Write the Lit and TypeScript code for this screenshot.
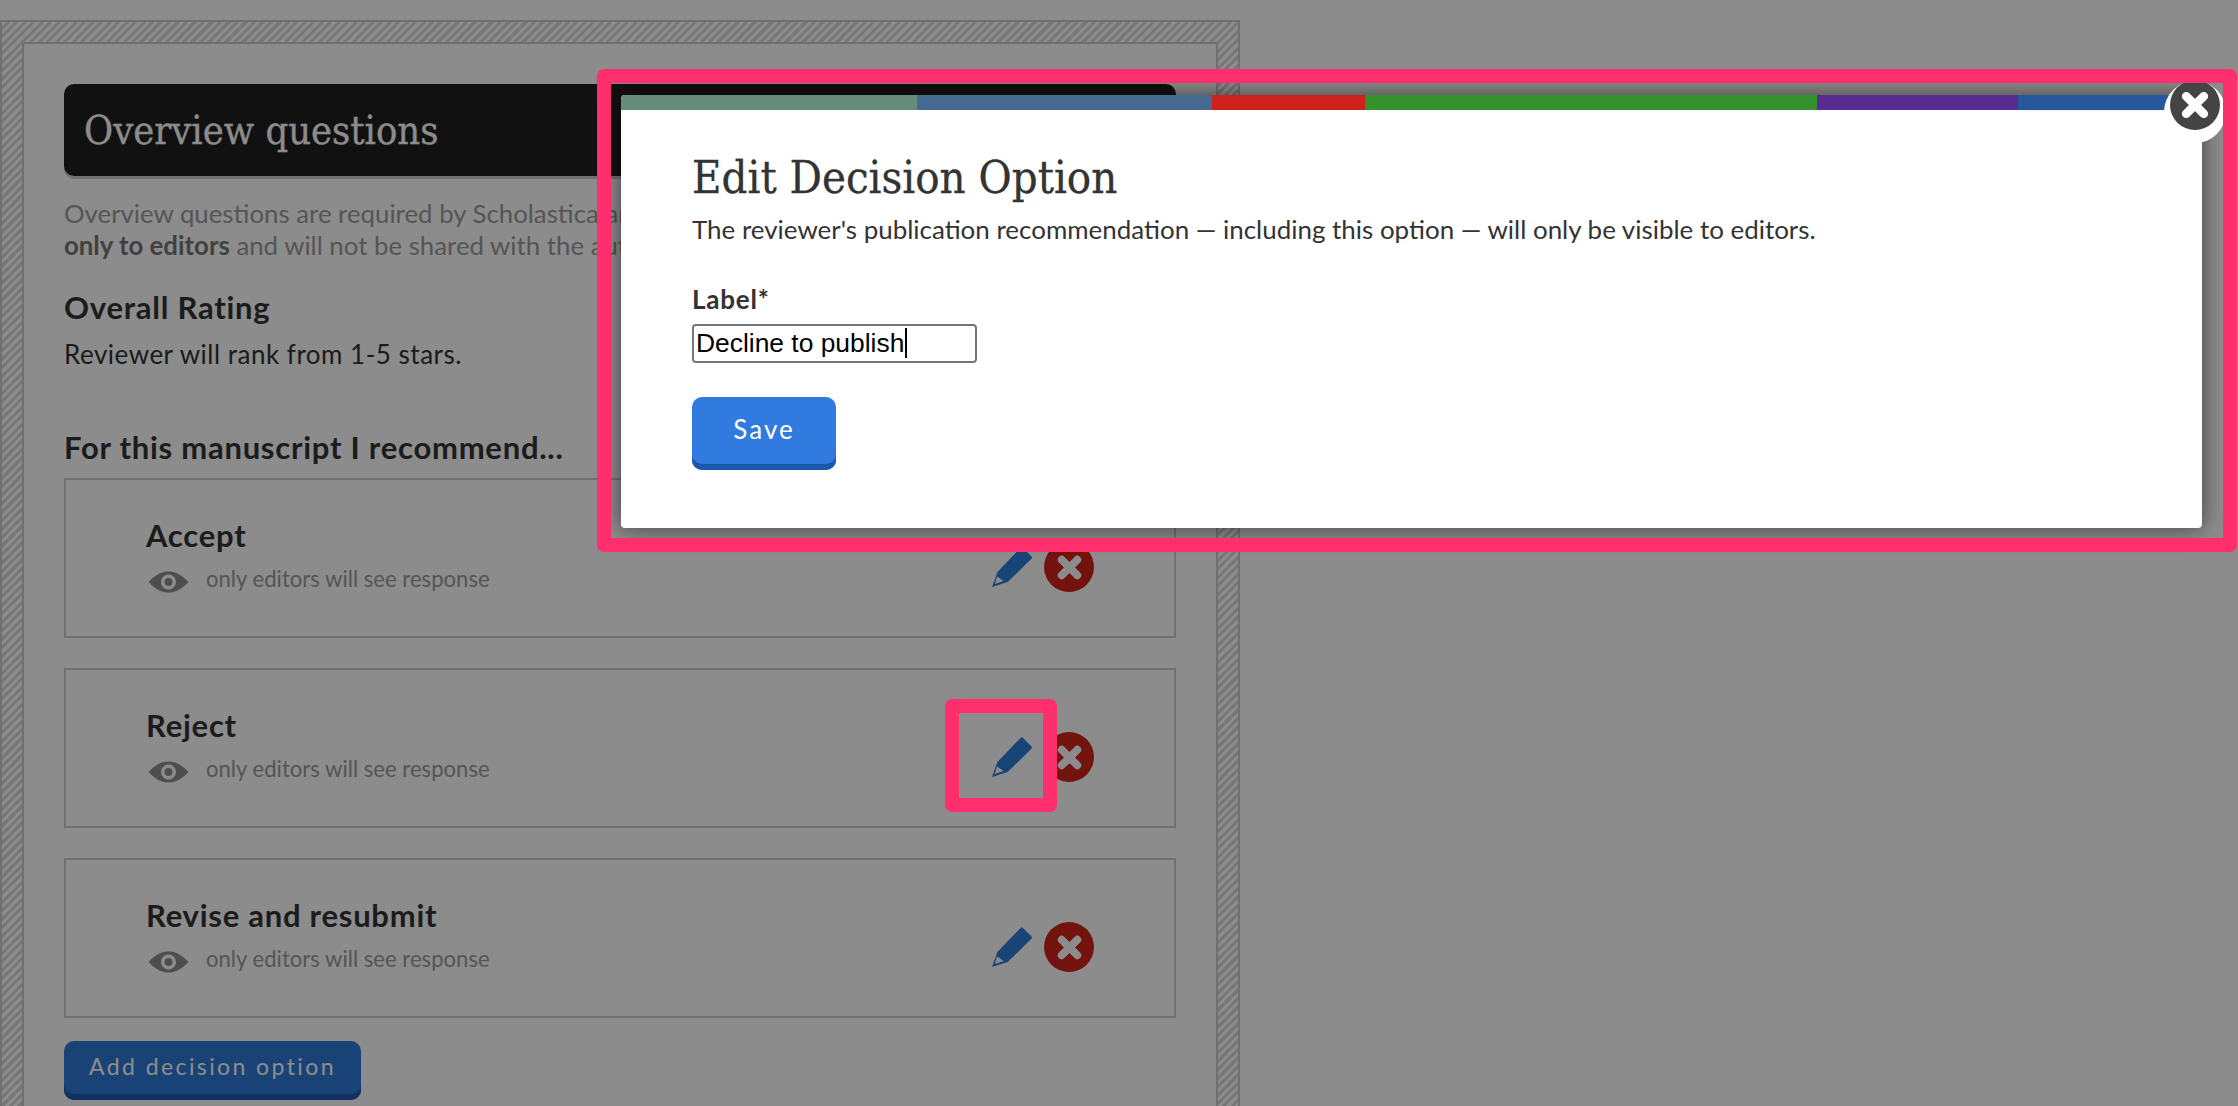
import { LitElement, html, css, svg } from "lit";
import { customElement } from "lit/decorators.js";

const STRIPES: [string, number][] = [
  ["#668b7a", 296], ["#456990", 295], ["#cf211e", 153],
  ["#33922b", 452], ["#592a8f", 201], ["#28579e", 184],
];
const OPTIONS = ["Accept", "Reject", "Revise and resubmit"];

const pencil = svg`<svg class="pencil" viewBox="0 0 40 40" aria-hidden="true"><path fill-rule="evenodd" d="M28.5 1 Q29.8 -.3 31 1 L39.4 9.2 Q40.5 10.5 39.4 11.8 L15.7 35 L0 40 L5.4 25 Z M5 29.5 L2.8 37 L11.7 34 Z"/></svg>`;
const cross = svg`<svg class="cross" viewBox="0 0 24 24" aria-hidden="true"><path d="M4.5 4.5 L19.5 19.5 M19.5 4.5 L4.5 19.5"/></svg>`;
const eye = svg`<svg class="eye" viewBox="0 0 41 22" aria-hidden="true"><path fill-rule="evenodd" d="M0.5 11 C8 3 14 0.5 20.5 0.5 C27 0.5 33 3 40.5 11 C33 19 27 21.5 20.5 21.5 C14 21.5 8 19 0.5 11 Z M20.5 3.5 A7.5 7.5 0 1 0 20.5 18.5 A7.5 7.5 0 1 0 20.5 3.5 Z"/><circle cx="20.5" cy="11" r="4"/></svg>`;

@customElement("app-root")
export class AppRoot extends LitElement {
  static styles = css`
    :host { display: block; height: 1106px; overflow: hidden; background: #fff; position: relative;
      font-family: Lato, "Open Sans", sans-serif; color: #333; }
    .page { padding-top: 20px; width: 1240px; }
    .hatch { box-sizing: border-box; width: 1240px; padding: 20px; border: 2px solid #ccc; border-bottom: 0;
      background: repeating-linear-gradient(135deg, #fff 0 3px, #d9d9d9 3px 6px); }
    .panel { background: #fff; border: 2px solid #ccc; border-bottom: 0; padding: 40px 40px 0; height: 1100px; }
    .head { height: 92px; box-sizing: border-box; margin: 0; padding: 0 20px; border-radius: 10px; background: #1f1f1f; color: #fff;
      box-shadow: 0 3px 0 #d0d0d0; font: 400 39.5px/93px "DejaVu Serif Condensed", "DejaVu Serif", serif; font-stretch: condensed;
      -webkit-text-stroke: .3px currentColor; }
    .intro { margin: 21px 0 0; font-size: 25.8px; line-height: 32px; color: #9b9b9b; white-space: nowrap; overflow: hidden; }
    .intro b { color: #777; font-weight: 700; }
    h3 { margin: 0; font-size: 31px; line-height: 36px; font-weight: 700; letter-spacing: .75px; color: #333; }
    .rating { margin-top: 28px; }
    .rank { margin: 11px 0 0; font-size: 26px; letter-spacing: .5px; line-height: 36px; }
    .rec { margin-top: 57px; }
    .cards { margin-top: 13px; display: flex; flex-direction: column; gap: 30px; }
    .card { box-sizing: border-box; height: 160px; border: 2px solid #ccc; display: flex; align-items: flex-start;
      padding: 37px 80px 0; background: #fff; }
    .card .info { flex: 1; min-width: 0; }
    .card h4 { margin: 0; font-size: 31px; line-height: 36px; font-weight: 700; letter-spacing: .75px; color: #333; }
    .note { display: flex; align-items: center; gap: 17px; margin-top: 12px; margin-left: 2px; font-size: 22.1px; line-height: 28px; color: #9b9b9b; }
    .eye { width: 41px; height: 22px; fill: #8f8f8f; flex: none; margin-top: 6px; filter: blur(.5px); }
    .actions { display: flex; align-items: center; gap: 12px; margin-top: 25px; }
    .pencil { width: 40px; height: 40px; fill: #2f7ed8; display: block; }
    .del { width: 50px; height: 50px; border-radius: 50%; background: #d1231b; display: grid; place-items: center; }
    .cross { width: 25px; height: 25px; fill: none; stroke: #fff; stroke-width: 7.5; stroke-linecap: round; display: block; }
    .add { display: block; margin-top: 23px; width: 297px; height: 59px; border: 0; border-radius: 10px; padding: 0 0 9px;
      background: #2f7ad9; box-shadow: inset 0 -6px 0 #205ab0; color: #fff; font: 400 23px Lato, sans-serif; letter-spacing: 2.4px; }
    .scrim { position: absolute; inset: 0; background: rgba(0,0,0,.45); }
    .modal { position: absolute; left: 621px; top: 95px; width: 1581px; height: 433px; background: #fff; border-radius: 4px;
      box-shadow: 0 0 22px rgba(0,0,0,.55); box-sizing: border-box; }
    .stripe { display: flex; height: 15px; border-radius: 4px 4px 0 0; overflow: hidden; }
    .stripe i { display: block; }
    .body { padding: 38px 71px 0; }
    h2 { margin: 0; font: 400 45px/60px "DejaVu Serif Condensed", "DejaVu Serif", serif; font-stretch: condensed; color: #333;
      -webkit-text-stroke: .3px currentColor; }
    .sub { margin: 3px 0 0; font-size: 25.95px; line-height: 36px; color: #333; }
    label { display: block; margin-top: 35px; font-size: 26px; letter-spacing: .8px; line-height: 34px; font-weight: 700; color: #333; }
    .field { position: relative; width: 285px; height: 39px; margin-top: 8px; }
    input { box-sizing: border-box; width: 285px; height: 39px; border: 2px solid #767676; border-radius: 4px; padding: 0 2px;
      margin: 0; font: 400 26.4px "Liberation Sans", Arial, sans-serif; color: #000; background: #fff; outline: none; display: block; }
    .caret { position: absolute; left: 213px; top: 4px; width: 2px; height: 30px; background: #000; }
    .save { display: block; margin-top: 34px; width: 144px; height: 73px; border: 0; border-radius: 10px; padding: 0 0 9px;
      background: #317be0; box-shadow: inset 0 -6px 0 #1a58ac; color: #fff; font: 400 26px Lato, sans-serif; letter-spacing: 2px; }
    .close-bg { position: absolute; left: 2164px; top: 81px; width: 62px; height: 62px; border-radius: 50%; background: #fff; }
    .close { position: absolute; left: 2170px; top: 80px; width: 50px; height: 50px; border-radius: 50%; background: #444;
      display: grid; place-items: center; }
    .close .cross { width: 28px; height: 28px; }
    .mark { position: absolute; box-sizing: border-box; border: 14px solid #ff2e6d; border-radius: 7px; }
    .mark.big { left: 597px; top: 69px; width: 1640px; height: 483px; }
    .mark.small { left: 945px; top: 699px; width: 112px; height: 113px; }
  `;

  render() {
    return html`
      <div class="page">
        <div class="hatch">
          <div class="panel">
            <div class="head">Overview questions</div>
            <p class="intro">Overview questions are required by Scholastica and responses to them are visible<br><b>only to editors</b> and will not be shared with the authors of the manuscript.</p>
            <h3 class="rating">Overall Rating</h3>
            <p class="rank">Reviewer will rank from 1-5 stars.</p>
            <h3 class="rec">For this manuscript I recommend...</h3>
            <div class="cards">
              ${OPTIONS.map((o) => html`
                <div class="card">
                  <div class="info">
                    <h4>${o}</h4>
                    <div class="note">${eye}<span>only editors will see response</span></div>
                  </div>
                  <div class="actions">${pencil}<span class="del">${cross}</span></div>
                </div>`)}
            </div>
            <button class="add">Add decision option</button>
          </div>
        </div>
      </div>
      <div class="scrim"></div>
      <div class="modal">
        <div class="stripe">${STRIPES.map(([c, w]) => html`<i style="background:${c};width:${w}px"></i>`)}</div>
        <div class="body">
          <h2>Edit Decision Option</h2>
          <p class="sub">The reviewer's publication recommendation — including this option — will only be visible to editors.</p>
          <label for="lbl">Label*</label>
          <div class="field"><input id="lbl" .value=${"Decline to publish"} /><span class="caret"></span></div>
          <button class="save">Save</button>
        </div>
      </div>
      <div class="close-bg"></div>
      <div class="close">${cross}</div>
      <div class="mark big"></div>
      <div class="mark small"></div>
    `;
  }
}
